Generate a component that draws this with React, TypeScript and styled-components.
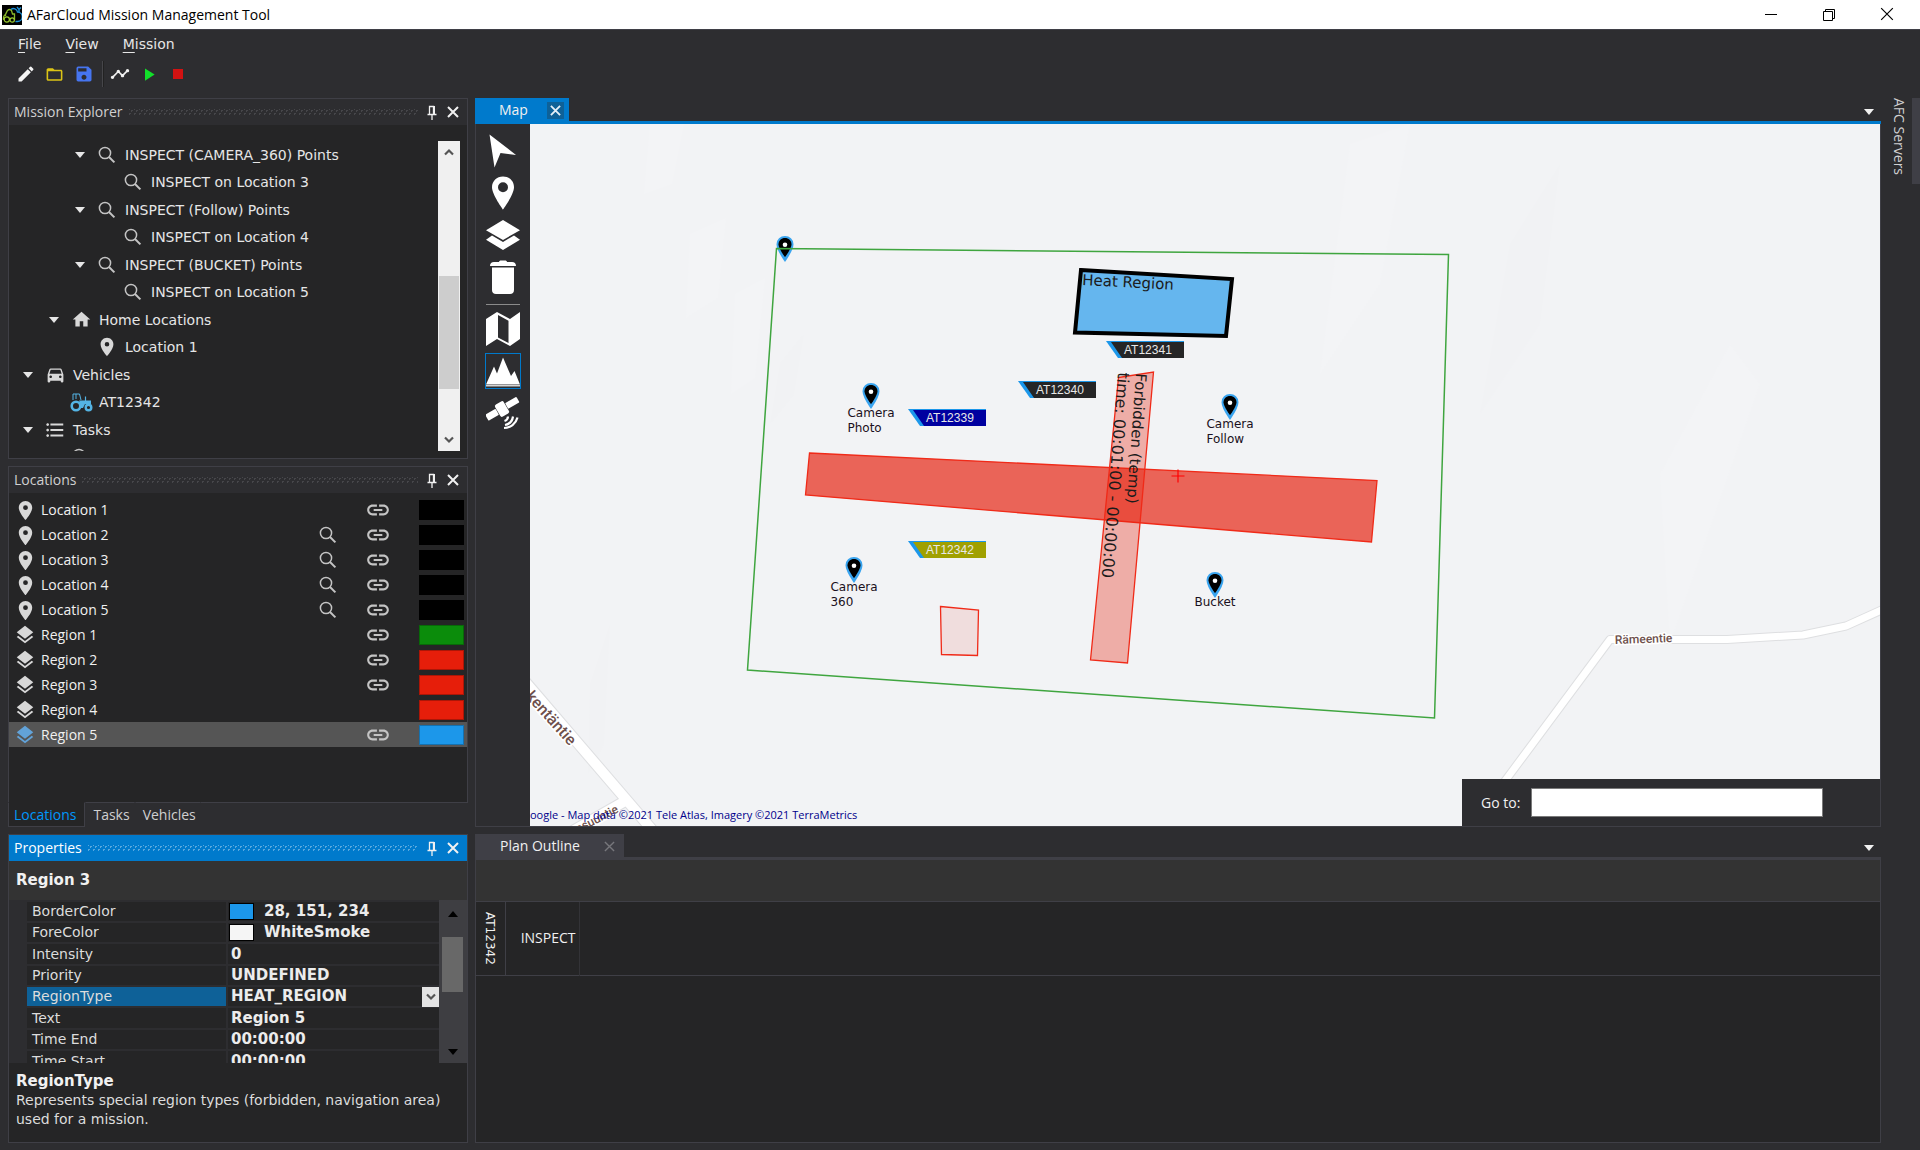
import React from "react";
import styled, { createGlobalStyle, css } from "styled-components";
import {
  MdEdit,
  MdFolderOpen,
  MdSave,
  MdTimeline,
  MdPlayArrow,
  MdStop,
  MdPlace,
  MdLayers,
  MdLink,
  MdHome,
  MdDirectionsCar,
  MdFormatListBulleted,
} from "react-icons/md";

const ui = `"Open Sans", "Noto Sans", sans-serif`;
const wide = `"DejaVu Sans", sans-serif`;
const c = {
  shell: "#2d2d30",
  body: "#252526",
  line: "#3f3f46",
  text: "#f1f1f1",
  muted: "#d0d0d0",
  accent: "#007acc",
  band: "#333333",
};

const GlobalStyle = createGlobalStyle`
  *, *::before, *::after { box-sizing: border-box; }
  body { margin: 0; background: ${c.shell}; color: ${c.text}; font: 14px/20px ${ui}; }
  button, input, select { font: inherit; color: inherit; }
  button { border: 0; padding: 0; background: none; display: inline-flex; align-items: center; justify-content: center; }
  ul { list-style: none; margin: 0; padding: 0; }
  svg { display: block; flex: none; }
`;

/* ---------- window frame ---------- */

const Window = styled.div`
  height: 100vh;
  display: flex;
  flex-direction: column;
  overflow: hidden;
`;
const TitleBar = styled.header`
  height: 29px;
  flex: none;
  display: flex;
  align-items: center;
  gap: 5px;
  padding: 0 4px 0 2px;
  background: #fff;
  color: #000;
`;
const Title = styled.h1`
  margin: 0;
  flex: 1;
  font-size: 14px;
  line-height: 20px;
  font-weight: 400;
`;
const CaptionButton = styled.button`
  width: 58px;
  height: 28px;
`;
const MenuBar = styled.nav`
  flex: none;
  display: flex;
  gap: 24px;
  height: 29px;
  padding-left: 18px;
  align-items: center;
  border-top: 1px solid ${c.line};
  color: #e6e6e6;
  font-family: ${wide};
`;
const MenuItem = styled.button``;
const Accel = styled.span`
  text-decoration: underline;
  text-underline-offset: 3px;
`;
const ToolBar = styled.div`
  flex: none;
  display: flex;
  align-items: center;
  height: 40px;
  padding: 0 0 8px 11px;
`;
const ToolButton = styled.button<{ $color: string }>`
  width: 29px;
  height: 26px;
  color: ${(p) => p.$color};
`;
const ToolDivider = styled.span`
  width: 2px;
  height: 26px;
  margin: 0 1px 0 4px;
  border-left: 1px solid #46464a;
  background: #222;
`;
const Workspace = styled.div`
  flex: 1;
  min-height: 0;
  display: grid;
  grid-template-columns: 460px minmax(0, 1fr) 32px;
  column-gap: 7px;
  padding: 0 0 7px 8px;
`;
const Column = styled.div`
  display: flex;
  flex-direction: column;
  gap: 7px;
  min-height: 0;
`;

/* ---------- dock panels ---------- */

const Panel = styled.section<{ $grow: number }>`
  flex: ${(p) => p.$grow} 1 0;
  min-height: 0;
  display: flex;
  flex-direction: column;
`;
const PanelFrame = styled.div<{ $openBottom?: boolean }>`
  flex: 1;
  min-height: 0;
  display: flex;
  flex-direction: column;
  border: 1px solid ${c.line};
  ${(p) => p.$openBottom && css`border-bottom: 0;`}
  background: ${c.body};
`;
const PanelHeader = styled.header<{ $active?: boolean }>`
  flex: none;
  height: 26px;
  display: flex;
  align-items: center;
  gap: 6px;
  padding: 0 7px 0 5px;
  background: ${(p) => (p.$active ? c.accent : c.shell)};
  color: ${(p) => (p.$active ? "#fff" : c.muted)};
  --dot: ${(p) => (p.$active ? "#59a8de" : "#46464a")};
`;
const PanelTitle = styled.h2`
  margin: 0;
  font-size: 14px;
  line-height: 20px;
  font-weight: 400;
`;
const Grip = styled.span`
  flex: 1;
  height: 6px;
  background-image: radial-gradient(circle, var(--dot) 1px, transparent 1px),
    radial-gradient(circle, var(--dot) 1px, transparent 1px);
  background-size: 5px 5px;
  background-position: 0 -1px, 3px 2px;
`;
const HeaderButton = styled.button`
  width: 15px;
  height: 20px;
  color: #f1f1f1;
`;

/* ---------- mission explorer ---------- */

const TreeArea = styled.div`
  flex: 1;
  min-height: 0;
  display: flex;
  padding: 16px 7px 7px 0;
`;
const Tree = styled.ul`
  flex: 1;
  overflow: hidden;
  color: #e6e6e6;
  font-family: ${wide};
`;
const TreeRow = styled.li<{ $level: number }>`
  height: 27px;
  display: flex;
  align-items: center;
  padding-left: ${(p) => 10 + p.$level * 26}px;
  &:nth-child(even) { height: 28px; }
`;
const TreeToggle = styled.button`
  width: 18px;
  height: 20px;
`;
const TreeGap = styled.span`
  width: 18px;
`;
const TreeIcon = styled.span`
  width: 36px;
  display: flex;
  justify-content: center;
  color: #d8d8d8;
`;
const LightScroll = styled.div`
  width: 22px;
  display: grid;
  grid-template-rows: 22px 113fr 114fr 40fr 22px;
  justify-items: stretch;
  background: #f0f0f0;
`;
const LightThumb = styled.span`
  grid-row: 3;
  margin: 0 1px;
  background: #cdcdcd;
`;
const LightArrow = styled.button<{ $row: number }>`
  grid-row: ${(p) => p.$row};
`;

/* ---------- locations ---------- */

const LocationList = styled.ul`
  flex: 1;
  min-height: 0;
  overflow: hidden;
  padding-top: 4px;
`;
const LocationRow = styled.li<{ $selected?: boolean }>`
  height: 25px;
  display: grid;
  grid-template-columns: 32px minmax(0, 1fr) 34px 66px 56px;
  align-items: center;
  background: ${(p) => (p.$selected ? "#555555" : "transparent")};
  color: ${c.text};
`;
const LocationIcon = styled.span<{ $selected?: boolean }>`
  display: flex;
  justify-content: center;
  color: ${(p) => (p.$selected ? "#62a3d9" : "#d8d8d8")};
`;
const Cell = styled.span`
  display: flex;
  justify-content: center;
  color: #c4c4c4;
`;
const ColorSwatch = styled.span<{ $color: string }>`
  height: 20px;
  width: 45px;
  justify-self: end;
  margin-right: 3px;
  border: 1px solid rgba(0, 0, 0, 0.25);
  background: ${(p) => p.$color};
`;
const DockTabs = styled.div`
  flex: none;
  display: flex;
  height: 25px;
`;
const DockTab = styled.button<{ $active?: boolean }>`
  padding: 0 ${(p) => (p.$active ? 8 : 4)}px 0 ${(p) => (p.$active ? 5 : 7)}px;
  border: 1px solid transparent;
  border-top-color: ${c.line};
  ${(p) =>
    p.$active
      ? css`
          background: ${c.body};
          border-color: transparent ${c.line} ${c.line} ${c.line};
          color: #0097fb;
        `
      : css`color: ${c.muted};`}
`;
const DockTabRest = styled.span`
  flex: 1;
  border-top: 1px solid ${c.line};
`;

/* ---------- properties ---------- */

const ObjectName = styled.h3`
  margin: 0;
  flex: none;
  height: 39px;
  padding-left: 7px;
  background: ${c.band};
  font: 700 15px/39px ${wide};
`;
const PropertyArea = styled.div`
  flex: none;
  display: flex;
  height: 163px;
  overflow: hidden;
  background: ${c.shell};
`;
const PropertyScroller = styled.div`
  flex: 1;
  overflow: hidden;
  padding-left: 18px;
`;
const PropertyTable = styled.table`
  width: 100%;
  border-collapse: collapse;
  table-layout: fixed;
  background: ${c.body};
  font: 14px/19px ${wide};
`;
const PropertyRow = styled.tr<{ $selected?: boolean }>`
  height: 21px;
  &:nth-child(3n) { height: 22px; }
  th { background: ${(p) => (p.$selected ? "#0e6198" : "transparent")}; }
`;
const PropertyName = styled.th`
  width: 200px;
  padding: 0 0 0 5px;
  border: 2px solid ${c.shell};
  border-width: 2px 2px 0 0;
  font-weight: 400;
  text-align: left;
  color: #dcdcdc;
`;
const PropertyValue = styled.td`
  padding: 0 0 0 3px;
  border-top: 2px solid ${c.shell};
  font-size: 15px;
  font-weight: 700;
  color: #ececec;
`;
const ValueLine = styled.span`
  display: flex;
  align-items: center;
  gap: 10px;
  margin-left: -2px;
`;
const ValueSwatch = styled.span<{ $color: string }>`
  width: 25px;
  height: 17px;
  border: 1px solid #000;
  background: ${(p) => p.$color};
`;
const SelectWrap = styled.span`
  display: flex;
  position: relative;
`;
const TypeSelect = styled.select`
  flex: 1;
  height: 19px;
  padding: 0;
  border: 0;
  appearance: none;
  background: transparent;
`;
const SelectArrow = styled.span`
  position: absolute;
  right: 0;
  top: 0;
  width: 17px;
  height: 20px;
  display: flex;
  align-items: center;
  justify-content: center;
  background: #e4e4e4;
  pointer-events: none;
`;
const DarkScroll = styled.div`
  width: 28px;
  display: grid;
  grid-template-rows: 27px 10fr 53fr 48fr 22px;
  background: #3e3e42;
`;
const DarkThumb = styled.span`
  grid-row: 3;
  margin: 0 4px 0 3px;
  background: #686868;
`;
const DarkArrow = styled.button<{ $row: number }>`
  grid-row: ${(p) => p.$row};
  color: #000;
`;
const HelpText = styled.div`
  flex: 1;
  padding: 9px 7px;
  color: #dcdcdc;
  font: 14px/19px ${wide};
`;
const HelpTitle = styled.strong`
  display: block;
  color: ${c.text};
  font-size: 15px;
`;

/* ---------- documents ---------- */

const TabStrip = styled.div<{ $color: string }>`
  flex: none;
  height: 26px;
  display: flex;
  justify-content: space-between;
  align-items: stretch;
  border-bottom: 3px solid ${(p) => p.$color};
`;
const DocTab = styled.div<{ $color: string; $active?: boolean }>`
  display: flex;
  align-items: center;
  gap: ${(p) => (p.$active ? 19 : 21)}px;
  padding: 1px ${(p) => (p.$active ? 5 : 6)}px 0 ${(p) => (p.$active ? 24 : 25)}px;
  background: ${(p) => p.$color};
`;
const TabClose = styled.button<{ $active?: boolean }>`
  width: 17px;
  height: 17px;
  color: ${(p) => (p.$active ? "#e4eff8" : "#77777c")};
  background: ${(p) => (p.$active ? "#0e6198" : "transparent")};
`;
const StripMenu = styled.button`
  width: 24px;
  padding-top: 4px;
`;
const MapBody = styled.div`
  flex: 1;
  min-height: 0;
  display: flex;
  border: 1px solid ${c.line};
  border-top: 0;
`;
const MapTools = styled.div`
  width: 54px;
  flex: none;
  display: flex;
  flex-direction: column;
  align-items: center;
  gap: 6px;
  padding-top: 9px;
`;
const MapTool = styled.button<{ $active?: boolean }>`
  width: 36px;
  height: 36px;
  color: #fff;
  border: 1px solid ${(p) => (p.$active ? c.accent : "transparent")};
`;
const MapToolDivider = styled.span`
  width: 34px;
  height: 1px;
  margin-top: 3px;
  background: #8a8a8a;
`;
const MapCanvas = styled.div`
  flex: 1;
  position: relative;
  overflow: hidden;
  background: #f2f3f5;
  color: #000;
`;
const MapDrawing = styled.svg`
  position: absolute;
  left: 0;
  top: 0;
`;
const Marker = styled.div<{ $x: number; $y: number }>`
  position: absolute;
  left: ${(p) => p.$x - 30}px;
  top: ${(p) => p.$y}px;
  width: 60px;
  display: flex;
  flex-direction: column;
  align-items: center;
`;
const MarkerLabel = styled.span`
  margin-top: -3px;
  white-space: pre-line;
  font: 12px/15px ${wide};
  color: #1a1020;
`;
const VehicleTag = styled.div<{ $x: number; $y: number }>`
  position: absolute;
  left: ${(p) => p.$x}px;
  top: ${(p) => p.$y}px;
  width: 78px;
  height: 17px;
  padding-left: 5px;
  background: #1c97ea;
  clip-path: polygon(0 0, 100% 0, 100% 100%, 12px 100%);
`;
const VehicleName = styled.span<{ $color: string }>`
  display: block;
  margin-top: 1px;
  height: 16px;
  padding-left: 13px;
  background: ${(p) => p.$color};
  color: #e8e8e8;
  clip-path: polygon(0 0, 100% 0, 100% 100%, 11px 100%);
  font: 12px/16px "Liberation Sans", sans-serif;
`;
const Credit = styled.p`
  position: absolute;
  left: 0;
  bottom: 3px;
  margin: 0;
  white-space: nowrap;
  font: 11px/16px ${ui};
  color: #00008b;
`;
const GoTo = styled.form`
  position: absolute;
  right: 0;
  bottom: 0;
  width: 418px;
  height: 47px;
  display: flex;
  align-items: center;
  gap: 11px;
  padding-left: 19px;
  background: ${c.shell};
  color: ${c.text};
`;
const GoToInput = styled.input`
  width: 292px;
  height: 29px;
  border: 1px solid #7a7a7a;
  background: #fff;
  color: #000;
`;
const PlanBody = styled.div`
  flex: 1;
  border: 1px solid ${c.line};
  border-top: 0;
  background: ${c.body};
`;
const PlanTable = styled.table`
  width: 100%;
  border-collapse: collapse;
  table-layout: fixed;
`;
const PlanHead = styled.thead`
  background: ${c.band};
  th { height: 41px; border-bottom: 1px solid ${c.line}; padding: 0; }
`;
const PlanRow = styled.tr`
  height: 74px;
  border-bottom: 1px solid ${c.line};
`;
const PlanVehicle = styled.th`
  padding: 0;
  border-right: 1px solid ${c.line};
  font: 12px/28px ${wide};
  writing-mode: vertical-rl;
  text-align: center;
`;
const PlanTask = styled.td`
  padding: 0 3px 0 0;
  border-right: 1px solid #333337;
  text-align: right;
`;
const SideDock = styled.aside`
  display: flex;
  justify-content: flex-end;
  align-items: flex-start;
`;
const SideTab = styled.button`
  height: 86px;
  padding-right: 3px;
  border-right: 8px solid ${c.line};
  justify-content: flex-start;
  writing-mode: vertical-rl;
  color: ${c.muted};
  white-space: nowrap;
`;

/* ---------- glyphs ---------- */

const Search = ({ size = 18 }: { size?: number }) => (
  <svg width={size} height={size} viewBox="0 0 18 18" fill="none" stroke="#c4c4c4">
    <circle cx="7" cy="7" r="5.6" strokeWidth="1.5" />
    <path d="M11 11l5.4 5.4" strokeWidth="2" />
  </svg>
);
const Cross = ({ size = 12, w = 2 }: { size?: number; w?: number }) => (
  <svg width={size} height={size} viewBox="0 0 12 12" stroke="currentColor" strokeWidth={w}>
    <path d="M1 1l10 10M11 1L1 11" />
  </svg>
);
const PushPin = () => (
  <svg width="10" height="15" viewBox="0 0 10 15" stroke="currentColor" fill="none">
    <path d="M2.5 9V1.5h4V9M0.5 9.5h9M5 9.5V15" strokeWidth="1.3" />
    <path d="M7 1v8" strokeWidth="2" />
  </svg>
);
const Caret = ({ up }: { up?: boolean }) => (
  <svg width="10" height="6" viewBox="0 0 10 6" fill="currentColor">
    <path d={up ? "M0 6L5 0l5 6z" : "M0 0h10L5 6z"} />
  </svg>
);
const Chevron = ({ up }: { up?: boolean }) => (
  <svg width="10" height="8" viewBox="0 0 10 8" fill="none" stroke="#555" strokeWidth="2.2">
    <path d={up ? "M1 6.5l4-4 4 4" : "M1 1.5l4 4 4-4"} />
  </svg>
);
const AppLogo = () => (
  <svg width="20" height="20" viewBox="0 0 20 20" fill="none">
    <rect width="20" height="20" fill="#000" />
    <path d="M3.5 11V9.5L5.5 5.5q2-2 4 0L10.500 9h2v6" stroke="#8ab82a" strokeWidth="1.300" />
    <path d="M3.500 9.500Q1 11 1.500 15" stroke="#8ab82a" strokeWidth="1.200" />
    <circle cx="4.800" cy="14.500" r="2.600" stroke="#9acb30" strokeWidth="1.200" />
    <circle cx="10.200" cy="15" r="2.200" stroke="#9acb30" strokeWidth="1.200" />
    <path d="M9 4.500a4 4 0 0 1 6.500 2.500 4 4 0 0 1 0 9.500h-2M15 2l2 2.500 2-2M17 4.500v3" stroke="#1c8fd6" strokeWidth="1.400" />
  </svg>
);
const Tractor = () => (
  <svg width="23" height="19" viewBox="0 0 23 19" fill="none" stroke="#54b4e4">
    <circle cx="6" cy="13" r="4.300" strokeWidth="2.600" />
    <circle cx="18.500" cy="14.500" r="2.800" strokeWidth="2.400" />
    <path d="M3 7V1h6.500l1.500 6M6 1v5" strokeWidth="1" />
    <path d="M9 7.500h12v3.500h-6l-2 4h-2l-1-5z" fill="#54b4e4" stroke="none" />
    <path d="M15.500 8V3.500" strokeWidth="1.200" />
  </svg>
);
const ArrowTool = () => (
  <svg width="34" height="34" viewBox="0 0 34 34" fill="currentColor">
    <path d="M3.500 0.500L30 21l-15.500-2L8.500 33.500z" />
  </svg>
);
const PinTool = () => (
  <svg width="34" height="34" viewBox="0 0 34 34" fill="currentColor" fillRule="evenodd">
    <path d="M17 0.500c6.200 0 11 4.600 11 10.700C28 18.500 17 33.500 17 33.500S6 18.500 6 11.200C6 5.100 10.800 0.500 17 0.500zM17 6.200a5 5 0 1 0 0 10 5 5 0 0 0 0-10z" />
  </svg>
);
const LayersTool = () => (
  <svg width="34" height="34" viewBox="0 0 34 34" fill="currentColor">
    <path d="M17 2l17 10.200-17 9.800L0 12.200z" />
    <path d="M6 17.500l11 6.500 11-6.500 6 4.300L17 32 0 21.800z" />
  </svg>
);
const TrashTool = () => (
  <svg width="34" height="34" viewBox="0 0 34 34" fill="currentColor">
    <path d="M4 6c0-2.500 1.500-4 4-4h5c0-1 1-1.500 2-1.500h4c1 0 2 0.500 2 1.500h5c2.500 0 4 1.500 4 4z" />
    <path d="M6 7.500h22V30c0 2.500-1.500 4-4 4H10c-2.500 0-4-1.500-4-4z" />
  </svg>
);
const RoadMapTool = () => (
  <svg width="34" height="34" viewBox="0 0 34 34" fill="currentColor" fillRule="evenodd">
    <path d="M0 7L11 0l13 7 10-7v27l-10 7-13-7-11 7zM12 3v22.500l10.500 5.500V8.700z" />
  </svg>
);
const MountainTool = () => (
  <svg width="34" height="34" viewBox="0 0 34 34" fill="currentColor">
    <path d="M0 30.500L8 12.500l3 7L17 3.500l8 18.500 3.500-5L34 30.500z" />
    <path d="M0 31h34v1.500H0z" opacity="0.8" />
  </svg>
);
const SatelliteTool = () => (
  <svg width="34" height="34" viewBox="0 0 34 34" fill="currentColor">
    <g transform="rotate(-30 16 13)">
      <rect x="-1.500" y="9.500" width="12" height="7" rx="1" />
      <rect x="11" y="6" width="10" height="14" rx="2" />
      <rect x="21.500" y="9.500" width="13" height="6.500" rx="1" />
    </g>
    <path d="M22 20.500a5 5 0 0 1-3.500 4.500M27 20.500a10 10 0 0 1-8 8.500M31.500 21.500a14 14 0 0 1-13.500 10.500" fill="none" stroke="currentColor" strokeWidth="2.200" />
  </svg>
);
const MapPin = () => (
  <svg width="20" height="27" viewBox="0 0 20 27">
    <path d="M10 2.500c3.900 0 7 2.900 7 6.800 0 4.800-7 15-7 15S3 14.100 3 9.300c0-3.900 3.100-6.800 7-6.800z" fill="#000" stroke="#39a4ef" strokeWidth="3" />
    <path d="M10 3c3.600 0 6.500 2.600 6.500 6.200 0 4.300-6.500 12.800-6.500 12.800S3.500 13.500 3.500 9.200C3.500 5.600 6.400 3 10 3z" fill="#000" />
    <circle cx="10" cy="9.800" r="2.300" fill="#fff" />
  </svg>
);

/* ---------- data ---------- */

type Glyph = "search" | "home" | "pin" | "car" | "tractor" | "list";
const glyphs: Record<Glyph, React.ReactNode> = {
  search: <Search />,
  home: <MdHome size={21} />,
  pin: <MdPlace size={22} />,
  car: <MdDirectionsCar size={21} />,
  tractor: <Tractor />,
  list: <MdFormatListBulleted size={22} />,
};
const tree: { label: string; level: number; glyph: Glyph; leaf?: boolean }[] = [
  { label: "INSPECT (CAMERA_360) Points", level: 2, glyph: "search" },
  { label: "INSPECT on Location 3", level: 3, glyph: "search", leaf: true },
  { label: "INSPECT (Follow) Points", level: 2, glyph: "search" },
  { label: "INSPECT on Location 4", level: 3, glyph: "search", leaf: true },
  { label: "INSPECT (BUCKET) Points", level: 2, glyph: "search" },
  { label: "INSPECT on Location 5", level: 3, glyph: "search", leaf: true },
  { label: "Home Locations", level: 1, glyph: "home" },
  { label: "Location 1", level: 2, glyph: "pin", leaf: true },
  { label: "Vehicles", level: 0, glyph: "car" },
  { label: "AT12342", level: 1, glyph: "tractor", leaf: true },
  { label: "Tasks", level: 0, glyph: "list" },
  { label: "", level: 1, glyph: "search", leaf: true },
];
const locations = [
  { name: "Location 1", task: false, link: true, color: "#000" },
  { name: "Location 2", task: true, link: true, color: "#000" },
  { name: "Location 3", task: true, link: true, color: "#000" },
  { name: "Location 4", task: true, link: true, color: "#000" },
  { name: "Location 5", task: true, link: true, color: "#000" },
  { name: "Region 1", task: false, link: true, color: "#0b8c0b" },
  { name: "Region 2", task: false, link: true, color: "#e61e0a" },
  { name: "Region 3", task: false, link: true, color: "#e61e0a" },
  { name: "Region 4", task: false, link: false, color: "#e61e0a" },
  { name: "Region 5", task: false, link: true, color: "#1c97ea", selected: true },
];
const properties: { name: string; value: string; swatch?: string; select?: boolean }[] = [
  { name: "BorderColor", value: "28, 151, 234", swatch: "#1c97ea" },
  { name: "ForeColor", value: "WhiteSmoke", swatch: "#f5f5f5" },
  { name: "Intensity", value: "0" },
  { name: "Priority", value: "UNDEFINED" },
  { name: "RegionType", value: "HEAT_REGION", select: true },
  { name: "Text", value: "Region 5" },
  { name: "Time End", value: "00:00:00" },
  { name: "Time Start", value: "00:00:00" },
];
const markers = [
  { x: 341, y: 258, label: "Camera\nPhoto" },
  { x: 700, y: 269, label: "Camera\nFollow" },
  { x: 324, y: 432, label: "Camera\n360" },
  { x: 685, y: 447, label: "Bucket" },
];
const vehicles = [
  { x: 576, y: 217, name: "AT12341", color: "#252526" },
  { x: 488, y: 257, name: "AT12340", color: "#252526" },
  { x: 378, y: 285, name: "AT12339", color: "#0000a0" },
  { x: 378, y: 417, name: "AT12342", color: "#a0a000" },
];

/* ---------- parts ---------- */

const Header = ({ title, active }: { title: string; active?: boolean }) => (
  <PanelHeader $active={active}>
    <PanelTitle>{title}</PanelTitle>
    <Grip />
    <HeaderButton aria-label={`Pin ${title}`}>
      <PushPin />
    </HeaderButton>
    <HeaderButton aria-label={`Close ${title}`}>
      <Cross />
    </HeaderButton>
  </PanelHeader>
);

const Explorer = () => (
  <Panel $grow={361}>
    <PanelFrame>
      <Header title="Mission Explorer" />
      <TreeArea>
        <Tree>
          {tree.map((n, i) => (
            <TreeRow key={i} $level={n.level}>
              {n.leaf ? (
                <TreeGap />
              ) : (
                <TreeToggle aria-label={`Collapse ${n.label}`}>
                  <Caret />
                </TreeToggle>
              )}
              <TreeIcon>{glyphs[n.glyph]}</TreeIcon>
              {n.label}
            </TreeRow>
          ))}
        </Tree>
        <LightScroll>
          <LightArrow $row={1} aria-label="Scroll up">
            <Chevron up />
          </LightArrow>
          <LightThumb />
          <LightArrow $row={5} aria-label="Scroll down">
            <Chevron />
          </LightArrow>
        </LightScroll>
      </TreeArea>
    </PanelFrame>
  </Panel>
);

const Locations = () => (
  <Panel $grow={361}>
    <PanelFrame $openBottom>
      <Header title="Locations" />
      <LocationList>
        {locations.map((l) => (
          <LocationRow key={l.name} $selected={l.selected}>
            <LocationIcon $selected={l.selected}>
              {l.name.startsWith("Region") ? <MdLayers size={22} /> : <MdPlace size={23} />}
            </LocationIcon>
            {l.name}
            <Cell>{l.task && <Search />}</Cell>
            <Cell>{l.link && <MdLink size={26} />}</Cell>
            <ColorSwatch $color={l.color} />
          </LocationRow>
        ))}
      </LocationList>
    </PanelFrame>
    <DockTabs>
      <DockTab $active>Locations</DockTab>
      <DockTab>Tasks</DockTab>
      <DockTab>Vehicles</DockTab>
      <DockTabRest />
    </DockTabs>
  </Panel>
);

const Properties = () => (
  <Panel $grow={309}>
    <PanelFrame>
      <Header title="Properties" active />
      <ObjectName>Region 3</ObjectName>
      <PropertyArea>
        <PropertyScroller>
          <PropertyTable>
            <tbody>
              {properties.map((p) => (
                <PropertyRow key={p.name} $selected={p.select}>
                  <PropertyName scope="row">{p.name}</PropertyName>
                  <PropertyValue>
                    {p.select ? (
                      <SelectWrap>
                        <TypeSelect aria-label={p.name} defaultValue={p.value}>
                          <option>{p.value}</option>
                        </TypeSelect>
                        <SelectArrow>
                          <Chevron />
                        </SelectArrow>
                      </SelectWrap>
                    ) : p.swatch ? (
                      <ValueLine>
                        <ValueSwatch $color={p.swatch} />
                        {p.value}
                      </ValueLine>
                    ) : (
                      p.value
                    )}
                  </PropertyValue>
                </PropertyRow>
              ))}
            </tbody>
          </PropertyTable>
        </PropertyScroller>
        <DarkScroll>
          <DarkArrow $row={1} aria-label="Scroll up">
            <Caret up />
          </DarkArrow>
          <DarkThumb />
          <DarkArrow $row={5} aria-label="Scroll down">
            <Caret />
          </DarkArrow>
        </DarkScroll>
      </PropertyArea>
      <HelpText>
        <HelpTitle>RegionType</HelpTitle>
        Represents special region types (forbidden, navigation area) used for a mission.
      </HelpText>
    </PanelFrame>
  </Panel>
);

const Terrain = () => (
  <MapDrawing width="1350" height="702" viewBox="0 0 1350 702">
    <g fill="#f3f4f6">
      <path d="M120 0h34l-12 60-28 10z" />
      <path d="M160 110l36-16-8 80-32 20z" />
      <path d="M205 170l30-16-10 100-24 16z" />
      <path d="M820 20l60-20-30 160-60 90z" />
      <path d="M1130 350l70-130 30 40-90 260z" />
    </g>
    <g fill="#f1f2f4">
      <path d="M250 240l24-30-10 60-24 30z" />
      <path d="M60 560l20-60-6 120-16 30z" />
      <path d="M980 120l50-80-20 160-60 90z" />
    </g>
    <g fill="none" strokeLinejoin="round">
      <g stroke="#dedfe1">
        <path d="M-8 554L130 715" strokeWidth="12" />
        <path d="M97 676L20 720" strokeWidth="12" />
        <path d="M969 665L1080 515.500l117 0 76-4.500 43-9 40-18" strokeWidth="9" />
      </g>
      <g stroke="#fff">
        <path d="M-8 554L130 715" strokeWidth="10" />
        <path d="M97 676L20 720" strokeWidth="10" />
        <path d="M969 665L1080 515.500l117 0 76-4.500 43-9 40-18" strokeWidth="7" />
      </g>
    </g>
    <g fill="#6d4f4c" stroke="#fff" strokeWidth="3" paintOrder="stroke" fontFamily="Roboto, sans-serif" fontWeight="500">
      <text x="1085" y="520" fontSize="12" transform="rotate(-2 1085 520)">Rämeentie</text>
      <text x="-5" y="573" fontSize="16" transform="rotate(48 -5 573)">kentäntie</text>
      <text x="48" y="709" fontSize="12" transform="rotate(-27 48 709)">nsuuntie</text>
    </g>
  </MapDrawing>
);

const Regions = () => (
  <MapDrawing width="1350" height="702" viewBox="0 0 1350 702">
    <path d="M246.500 124.500L918.500 130.500 904.500 594 217.500 546z" fill="none" stroke="#3fa53f" strokeWidth="1.500" />
    <path d="M551 146L702 155 696 212 545 208.500z" fill="#1c97ea" fillOpacity="0.66" stroke="#000" strokeWidth="4" />
    <g stroke="#f02a18" strokeWidth="1.300" fill="#e61e0a">
      <path d="M279.500 329L847 356.500 841.500 418 275.500 371z" fillOpacity="0.67" />
      <path d="M588.500 253.500L623.500 248 597.500 539 560.500 536z" fillOpacity="0.33" />
      <path d="M410.500 482.500L448.500 486 447.500 531.500 411.500 530.500z" fillOpacity="0.1" />
    </g>
    <path d="M641.500 352h13M648 345.500v13" stroke="#f00" strokeWidth="1.200" />
    <g fill="#1b1b1b" fontFamily="DejaVu Sans, sans-serif" fontSize="15">
      <text x="552" y="161" transform="rotate(3 552 161)">Heat Region</text>
      <text x="606" y="249" transform="rotate(94 606 249)">Forbidden (temp)</text>
      <text x="588" y="248" fontSize="16" transform="rotate(94.500 588 248)">time: 00:01:00 - 00:00:00</text>
    </g>
  </MapDrawing>
);

const MapDocument = () => (
  <Panel $grow={729}>
    <TabStrip $color={c.accent}>
      <DocTab $color={c.accent} $active>
        Map
        <TabClose $active aria-label="Close Map">
          <Cross size={11} />
        </TabClose>
      </DocTab>
      <StripMenu aria-label="Open documents">
        <Caret />
      </StripMenu>
    </TabStrip>
    <MapBody>
      <MapTools>
        <MapTool aria-label="Select"><ArrowTool /></MapTool>
        <MapTool aria-label="Add location"><PinTool /></MapTool>
        <MapTool aria-label="Add region"><LayersTool /></MapTool>
        <MapTool aria-label="Delete"><TrashTool /></MapTool>
        <MapToolDivider />
        <MapTool aria-label="Road map"><RoadMapTool /></MapTool>
        <MapTool aria-label="Terrain" $active><MountainTool /></MapTool>
        <MapTool aria-label="Satellite"><SatelliteTool /></MapTool>
      </MapTools>
      <MapCanvas>
        <Terrain />
        <Marker $x={255} $y={111}>
          <MapPin />
        </Marker>
        <Regions />
        {markers.map((m) => (
          <Marker key={m.label} $x={m.x} $y={m.y}>
            <MapPin />
            <MarkerLabel>{m.label}</MarkerLabel>
          </Marker>
        ))}
        {vehicles.map((v) => (
          <VehicleTag key={v.name} $x={v.x} $y={v.y}>
            <VehicleName $color={v.color}>{v.name}</VehicleName>
          </VehicleTag>
        ))}
        <Credit>oogle - Map data ©2021 Tele Atlas, Imagery ©2021 TerraMetrics</Credit>
        <GoTo>
          <label htmlFor="goto">Go to:</label>
          <GoToInput id="goto" type="text" />
        </GoTo>
      </MapCanvas>
    </MapBody>
  </Panel>
);

const PlanDocument = () => (
  <Panel $grow={309}>
    <TabStrip $color={c.line}>
      <DocTab $color={c.line}>
        Plan Outline
        <TabClose aria-label="Close Plan Outline">
          <Cross size={11} w={1.5} />
        </TabClose>
      </DocTab>
      <StripMenu aria-label="Open documents">
        <Caret />
      </StripMenu>
    </TabStrip>
    <PlanBody>
      <PlanTable>
        <colgroup>
          <col width="29" />
          <col width="74" />
          <col />
        </colgroup>
        <PlanHead>
          <tr>
            <th />
            <th />
            <th />
          </tr>
        </PlanHead>
        <tbody>
          <PlanRow>
            <PlanVehicle scope="row">AT12342</PlanVehicle>
            <PlanTask>INSPECT</PlanTask>
            <td />
          </PlanRow>
        </tbody>
      </PlanTable>
    </PlanBody>
  </Panel>
);

export default function App() {
  return (
    <Window>
      <GlobalStyle />
      <TitleBar>
        <AppLogo />
        <Title>AFarCloud Mission Management Tool</Title>
        <div>
          <CaptionButton aria-label="Minimize">
            <svg width="12" height="12" stroke="#000"><path d="M0 5.500h12" /></svg>
          </CaptionButton>
          <CaptionButton aria-label="Restore">
            <svg width="12" height="12" stroke="#000" fill="none">
              <path d="M0.500 2.500h9v9h-9zM2.500 2.500v-2h9v9h-2" />
            </svg>
          </CaptionButton>
          <CaptionButton aria-label="Close">
            <Cross size={14} w={1} />
          </CaptionButton>
        </div>
      </TitleBar>
      <MenuBar>
        <MenuItem><span><Accel>F</Accel>ile</span></MenuItem>
        <MenuItem><span><Accel>V</Accel>iew</span></MenuItem>
        <MenuItem><span><Accel>M</Accel>ission</span></MenuItem>
      </MenuBar>
      <ToolBar>
        <ToolButton $color="#f5f5f5" aria-label="Edit"><MdEdit size={20} /></ToolButton>
        <ToolButton $color="#dcc416" aria-label="Open"><MdFolderOpen size={19} /></ToolButton>
        <ToolButton $color="#4675f0" aria-label="Save"><MdSave size={20} /></ToolButton>
        <ToolDivider />
        <ToolButton $color="#f0f0f0" aria-label="Plan"><MdTimeline size={20} /></ToolButton>
        <ToolButton $color="#12e02a" aria-label="Start"><MdPlayArrow size={21} /></ToolButton>
        <ToolButton $color="#d21212" aria-label="Stop"><MdStop size={20} /></ToolButton>
      </ToolBar>
      <Workspace>
        <Column>
          <Explorer />
          <Locations />
          <Properties />
        </Column>
        <Column>
          <MapDocument />
          <PlanDocument />
        </Column>
        <SideDock>
          <SideTab>AFC Servers</SideTab>
        </SideDock>
      </Workspace>
    </Window>
  );
}
